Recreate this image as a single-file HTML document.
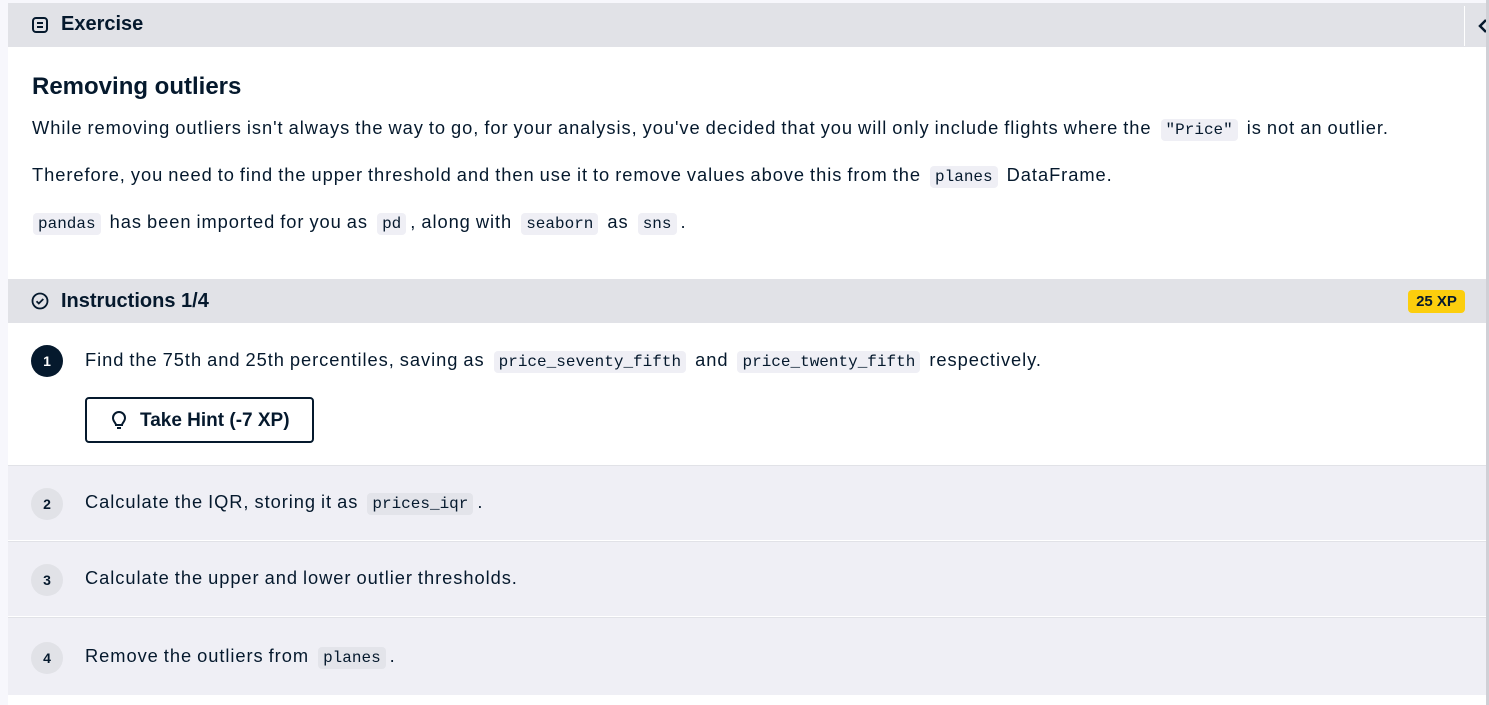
<!DOCTYPE html>
<html><head><style>
*{margin:0;padding:0;box-sizing:border-box}
body{width:1489px;height:705px;background:#f7f7fc;font-family:"Liberation Sans",sans-serif;color:#05192d;position:relative;overflow:hidden}
.panel{position:absolute;left:8px;top:3px;width:1478px;height:702px;background:#fff}
.hdr{position:absolute;left:0;width:1478px;background:#e1e2e7;height:44px}
.t{position:absolute;font-size:18.3px;letter-spacing:0.95px;word-spacing:-1px;white-space:nowrap;line-height:24px}
code{font-family:"Liberation Mono",monospace;font-size:16px;letter-spacing:0;word-spacing:0;background:#efeff5;border-radius:4px;padding:2px 5px;margin:0 4px}
.row code{background:#e3e4ea}
.b{font-weight:bold;letter-spacing:0;word-spacing:0}
.row{position:absolute;left:0;width:1478px;background:#efeff5;height:75px;border-top:1px solid #e1e2e7}
.num{position:absolute;left:23px;width:32px;height:32px;border-radius:50%;background:#e1e2e7;font-weight:bold;font-size:14px;text-align:center;line-height:32px}
</style></head><body>
<div class="panel">
 <div class="hdr" style="top:0">
  <svg style="position:absolute;left:23px;top:13px" width="18" height="18" viewBox="0 0 18 18"><rect x="2" y="2" width="14" height="14" rx="3" fill="none" stroke="#05192d" stroke-width="2"/><path d="M6 7h6M6 11h6" stroke="#05192d" stroke-width="2"/></svg>
  <div class="t b" style="left:53px;top:9px;font-size:20px">Exercise</div>
  <div style="position:absolute;left:1456px;top:3px;width:1px;height:40px;background:#fff"></div>
  <svg style="position:absolute;left:1470px;top:15px" width="10" height="16"><path d="M8 2L2 8l6 6" fill="none" stroke="#05192d" stroke-width="2.5"/></svg>
 </div>
 <div class="t b" style="left:24px;top:69px;font-size:24px;line-height:30px">Removing outliers</div>
 <div class="t" style="left:24px;top:113px">While removing outliers isn't always the way to go, for your analysis, you've decided that you will only include flights where the <code>"Price"</code> is not an outlier.</div>
 <div class="t" style="left:24px;top:160px">Therefore, you need to find the upper threshold and then use it to remove values above this from the <code>planes</code> DataFrame.</div>
 <div class="t" style="left:21px;top:207px"><code>pandas</code> has been imported for you as <code>pd</code>, along with <code>seaborn</code> as <code>sns</code>.</div>
 <div class="hdr" style="top:276px">
  <svg style="position:absolute;left:23px;top:13px" width="18" height="18" viewBox="0 0 18 18"><circle cx="9" cy="9" r="7.5" fill="none" stroke="#05192d" stroke-width="1.8"/><path d="M5.5 9.2l2.3 2.3 4.5-4.5" fill="none" stroke="#05192d" stroke-width="1.8"/></svg>
  <div class="t b" style="left:53px;top:10px;font-size:20px">Instructions 1/4</div>
  <div style="position:absolute;left:1400px;top:11px;width:57px;height:23px;background:#fcce0d;border-radius:4px;font-weight:bold;font-size:15px;text-align:center;line-height:23px">25 XP</div>
 </div>
 <div class="num" style="top:342px;background:#05192d;color:#fff">1</div>
 <div class="t" style="left:77px;top:345px">Find the 75th and 25th percentiles, saving as <code>price_seventy_fifth</code> and <code>price_twenty_fifth</code> respectively.</div>
 <div style="position:absolute;left:77px;top:394px;width:229px;height:46px;border:2px solid #05192d;border-radius:4px">
  <svg style="position:absolute;left:22px;top:12px" width="20" height="20" viewBox="0 0 20 20"><path d="M7 14c0-2-3-3.5-3-7a6 6 0 0 1 12 0c0 3.5-3 5-3 7z M8 17h4" fill="none" stroke="#05192d" stroke-width="2"/></svg>
  <div class="t b" style="left:53px;top:10px;font-size:19px">Take Hint (-7 XP)</div>
 </div>
 <div class="row" style="top:462px"><div class="num" style="top:22px">2</div><div class="t" style="left:77px;top:24px">Calculate the IQR, storing it as <code>prices_iqr</code>.</div></div>
 <div class="row" style="top:538px"><div class="num" style="top:22px">3</div><div class="t" style="left:77px;top:24px">Calculate the upper and lower outlier thresholds.</div></div>
 <div class="row" style="top:614px;height:78px"><div class="num" style="top:24px">4</div><div class="t" style="left:77px;top:26px">Remove the outliers from <code>planes</code>.</div></div>
</div>
<div style="position:absolute;left:1486px;top:0;width:3px;height:705px;background:#d0d0d6"></div>
</body></html>
